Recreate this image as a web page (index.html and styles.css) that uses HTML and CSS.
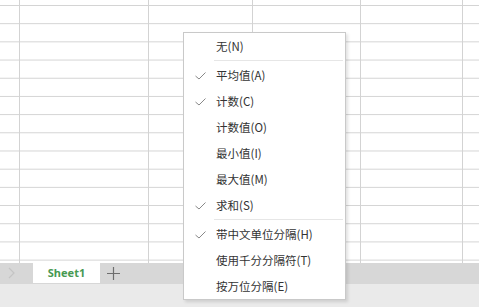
FILE: index.html
```html
<!DOCTYPE html>
<html lang="zh-CN">
<head>
    <meta charset="UTF-8">
    <meta name="viewport" content="width=device-width, initial-scale=1.0">
    <title>状态栏统计</title>
    <link rel="stylesheet" href="styles.css">
</head>
<body>
    <div class="sheet">
        <div class="col col-a"></div>
        <div class="col col-b"></div>
        <div class="col col-c"></div>
        <div class="col col-d"></div>
        <div class="col col-e"></div>
        <div class="col col-f"></div>
    </div>

    <div class="tab-bar">
        <span class="scroll-arrow">
            <svg width="8" height="12" viewBox="0 0 8 12"><path d="M1 1 L6 6 L1 11" fill="none" stroke="#c4c4c4" stroke-width="1.2"/></svg>
        </span>
        <div class="sheet-tab">Sheet1</div>
        <span class="add-sheet">
            <svg width="13" height="13" viewBox="0 0 13 13"><path d="M6.5 0 V13 M0 6.5 H13" stroke="#6e6e6e" stroke-width="1.2"/></svg>
        </span>
    </div>
    <div class="status-bar"></div>

    <!-- status bar context menu -->
    <ul class="menu">
        <li class="menu-item">无(N)</li>
        <li class="menu-sep"></li>
        <li class="menu-item checked">平均值(A)</li>
        <li class="menu-item checked">计数(C)</li>
        <li class="menu-item">计数值(O)</li>
        <li class="menu-item">最小值(I)</li>
        <li class="menu-item">最大值(M)</li>
        <li class="menu-item checked">求和(S)</li>
        <li class="menu-sep"></li>
        <li class="menu-item checked">带中文单位分隔(H)</li>
        <li class="menu-item">使用千分分隔符(T)</li>
        <li class="menu-item">按万位分隔(E)</li>
    </ul>
</body>
</html>
```

FILE: styles.css
```css
:root {
    --grid-line: #d3d3d3;
    --bar-gray: #d7d7d7;
    --tab-green: #479a52;
    --menu-text: #333;
}

* {
    margin: 0;
    padding: 0;
    box-sizing: border-box;
}

body {
    width: 479px;
    height: 307px;
    overflow: hidden;
    background-color: #eaeaea;
    font-family: "Noto Sans CJK SC", "Noto Sans", sans-serif;
}

.sheet {
    display: flex;
    height: 263px;
    background-color: white;
    background-image: linear-gradient(var(--grid-line) 1px, transparent 1px);
    background-size: 100% 18.2px;
    background-position: 0 5px;
}

.col {
    border-right: 1px solid var(--grid-line);
}

.col-a { width: 20px; }
.col-b { width: 129px; }
.col-c { width: 104px; }
.col-d { width: 108px; }
.col-e { width: 102px; }
.col-f { flex: 1; border-right: none; }

.tab-bar {
    display: flex;
    align-items: flex-start;
    height: 21px;
    background-color: var(--bar-gray);
}

.scroll-arrow {
    display: flex;
    align-items: center;
    height: 20px;
    margin-left: 8px;
    width: 25px;
}

.sheet-tab {
    width: 67px;
    height: 20px;
    line-height: 20px;
    text-align: center;
    background-color: white;
    color: var(--tab-green);
    font-family: "Noto Sans", sans-serif;
    font-weight: bold;
    font-size: 11px;
}

.add-sheet {
    display: flex;
    align-items: center;
    height: 20px;
    margin-left: 7px;
}

.status-bar {
    height: 23px;
    background-color: #eaeaea;
}

.menu {
    position: absolute;
    left: 183px;
    top: 32px;
    width: 163px;
    list-style: none;
    background-color: white;
    border: 1px solid #c9c9c9;
    box-shadow: 2px 2px 3px rgba(0, 0, 0, 0.12);
}

.menu-item {
    position: relative;
    height: 26px;
    line-height: 26px;
    padding-left: 32px;
    font-size: 11.5px;
    color: var(--menu-text);
    white-space: nowrap;
}

.menu-item.checked::before {
    content: "";
    position: absolute;
    left: 11px;
    top: 10px;
    width: 11px;
    height: 8px;
    background: url("data:image/svg+xml;utf8,<svg xmlns='http://www.w3.org/2000/svg' width='11' height='8' viewBox='0 0 11 8'><path d='M0.5 4 L4 7 L10.5 0.5' fill='none' stroke='%23888' stroke-width='1'/></svg>") no-repeat;
}

.menu-sep {
    height: 3px;
    margin-left: 30px;
    margin-right: 2px;
    border-top: 1px solid #fff;
    border-bottom: 1px solid #fff;
    background-color: #e6e6e6;
}
```
